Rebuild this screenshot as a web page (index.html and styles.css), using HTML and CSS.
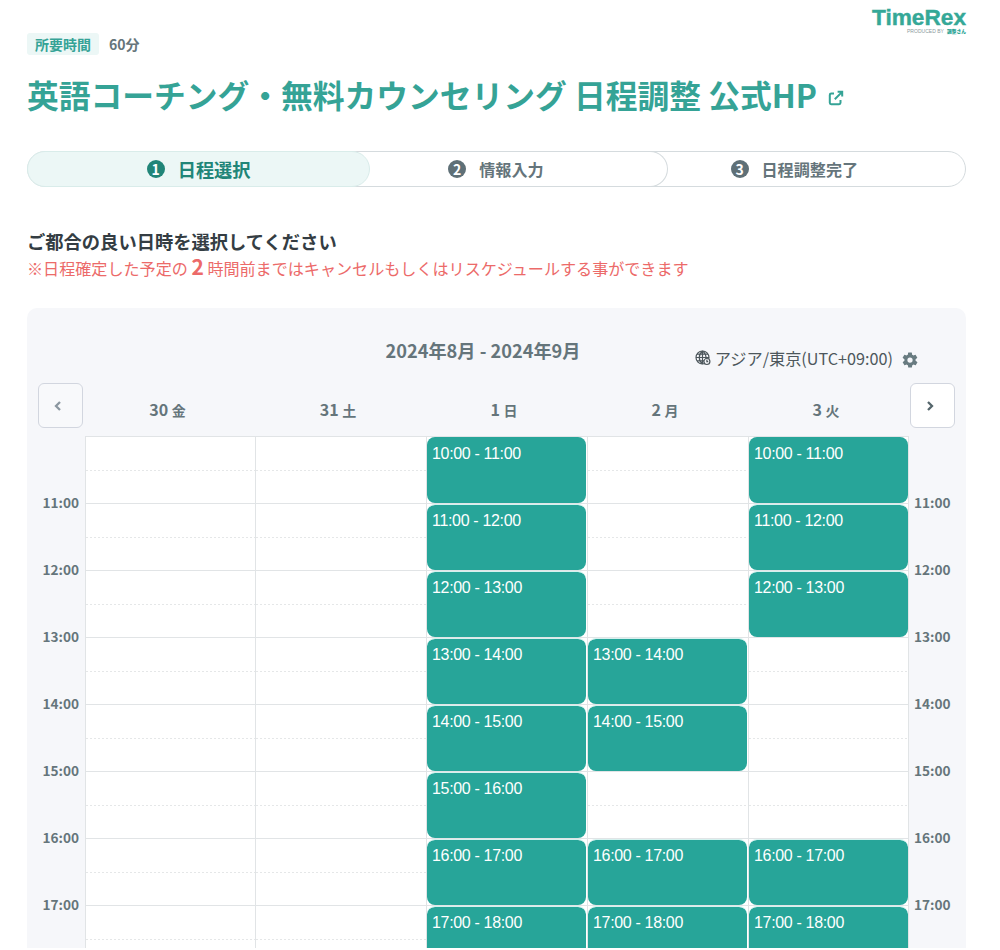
FILE: index.html
```html
<!DOCTYPE html>
<html lang="ja">
<head>
<meta charset="utf-8">
<title>日程調整 | TimeRex</title>
<link rel="stylesheet" href="styles.css">
</head>
<body>
<main class="page">
  <header class="top">
    <div class="duration"><span class="duration-tag">所要時間</span><span class="duration-value">60分</span></div>
    <svg class="logo" width="96" height="34" viewBox="0 0 96 34">
      <text class="logo-name" x="1" y="19.500" textLength="94" lengthAdjust="spacingAndGlyphs">TimeRex</text>
      <text class="logo-by" x="36" y="27.500" textLength="37" lengthAdjust="spacingAndGlyphs">PRODUCED BY</text>
      <text class="logo-brand" x="76" y="27.500" textLength="19" lengthAdjust="spacingAndGlyphs">調整さん</text>
    </svg>
  </header>
  <h1 class="title"><span>英語コーチング・無料カウンセリング 日程調整 公式HP</span>
    <svg class="title-link" width="16" height="16" viewBox="0 0 16 16"><path d="M6 3.500H3.200Q1.800 3.500 1.800 4.900V12.800Q1.800 14.200 3.200 14.200H11.100Q12.500 14.200 12.500 12.800V10M6.800 9.200L13.400 2.600M9.600 1.800H14.200V6.400"/></svg>
  </h1>
  <ol class="steps">
    <li class="step step-active"><span class="num">1</span>日程選択</li>
    <li class="step step-second"><span class="num">2</span>情報入力</li>
    <li class="step step-third"><span class="num">3</span>日程調整完了</li>
  </ol>
  <h2 class="lead">ご都合の良い日時を選択してください</h2>
  <p class="note">※日程確定した予定の <b>2</b> 時間前まではキャンセルもしくはリスケジュールする事ができます</p>

  <section class="calendar">
    <div class="cal-head">
      <div class="period">2024年8月 - 2024年9月</div>
      <div class="zone">
        <svg class="globe" width="16" height="16" viewBox="0 0 16 16"><circle cx="7.500" cy="7.500" r="6.500"/><path d="M7.500 1V14M1 7.500H14M2 4.200H13M2 10.800H9M7.500 1C3.200 4.500 3.200 10.500 7.500 14M7.500 1C10.400 3.200 11.400 6 10.800 9"/><circle class="clock" cx="11.900" cy="11.500" r="3"/><path d="M11.900 9.800V11.700H13.200"/></svg>
        <span>アジア/東京(UTC+09:00)</span>
        <svg class="gear" width="18" height="18" viewBox="0 0 24 24"><path d="M19.400 13a7.500 7.500 0 0 0 0-2l2.100-1.600a.5.5 0 0 0 .1-.7l-2-3.400a.5.5 0 0 0-.6-.2l-2.500 1a7.300 7.300 0 0 0-1.700-1L14.500 2.400a.5.5 0 0 0-.5-.4h-4a.5.5 0 0 0-.5.4l-.4 2.700a7.700 7.700 0 0 0-1.700 1l-2.500-1a.5.5 0 0 0-.6.2l-2 3.400a.5.5 0 0 0 .1.7L4.600 11a7.500 7.500 0 0 0 0 2l-2.100 1.600a.5.5 0 0 0-.1.700l2 3.400c.1.200.4.300.6.200l2.500-1a7.300 7.300 0 0 0 1.700 1l.4 2.700c0 .2.200.4.500.4h4c.2 0 .5-.2.5-.4l.4-2.700a7.700 7.700 0 0 0 1.700-1l2.500 1c.2.100.5 0 .6-.2l2-3.400a.5.5 0 0 0-.1-.7zM12 15.500a3.500 3.500 0 1 1 0-7 3.500 3.500 0 0 1 0 7z"/></svg>
      </div>
    </div>
    <div class="days">
      <button class="nav nav-prev" aria-label="前へ"><svg width="10" height="12" viewBox="0 0 10 12"><path d="M7 2L3 6L7 10"/></svg></button>
      <div class="day">30 <small>金</small></div>
      <div class="day">31 <small>土</small></div>
      <div class="day">1 <small>日</small></div>
      <div class="day">2 <small>月</small></div>
      <div class="day">3 <small>火</small></div>
      <button class="nav nav-next" aria-label="次へ"><svg width="10" height="12" viewBox="0 0 10 12"><path d="M3 2L7 6L3 10"/></svg></button>
    </div>
    <div class="hours">
      <div class="row"><div class="hour"></div><div class="cell"></div><div class="cell"></div><div class="cell"><div class="slot">10:00 - 11:00</div></div><div class="cell"></div><div class="cell"><div class="slot">10:00 - 11:00</div></div><div class="hour hour-right"></div></div>
      <div class="row"><div class="hour"><span>11:00</span></div><div class="cell"></div><div class="cell"></div><div class="cell"><div class="slot">11:00 - 12:00</div></div><div class="cell"></div><div class="cell"><div class="slot">11:00 - 12:00</div></div><div class="hour hour-right"><span>11:00</span></div></div>
      <div class="row"><div class="hour"><span>12:00</span></div><div class="cell"></div><div class="cell"></div><div class="cell"><div class="slot">12:00 - 13:00</div></div><div class="cell"></div><div class="cell"><div class="slot">12:00 - 13:00</div></div><div class="hour hour-right"><span>12:00</span></div></div>
      <div class="row"><div class="hour"><span>13:00</span></div><div class="cell"></div><div class="cell"></div><div class="cell"><div class="slot">13:00 - 14:00</div></div><div class="cell"><div class="slot">13:00 - 14:00</div></div><div class="cell"></div><div class="hour hour-right"><span>13:00</span></div></div>
      <div class="row"><div class="hour"><span>14:00</span></div><div class="cell"></div><div class="cell"></div><div class="cell"><div class="slot">14:00 - 15:00</div></div><div class="cell"><div class="slot">14:00 - 15:00</div></div><div class="cell"></div><div class="hour hour-right"><span>14:00</span></div></div>
      <div class="row"><div class="hour"><span>15:00</span></div><div class="cell"></div><div class="cell"></div><div class="cell"><div class="slot">15:00 - 16:00</div></div><div class="cell"></div><div class="cell"></div><div class="hour hour-right"><span>15:00</span></div></div>
      <div class="row"><div class="hour"><span>16:00</span></div><div class="cell"></div><div class="cell"></div><div class="cell"><div class="slot">16:00 - 17:00</div></div><div class="cell"><div class="slot">16:00 - 17:00</div></div><div class="cell"><div class="slot">16:00 - 17:00</div></div><div class="hour hour-right"><span>16:00</span></div></div>
      <div class="row"><div class="hour"><span>17:00</span></div><div class="cell"></div><div class="cell"></div><div class="cell"><div class="slot">17:00 - 18:00</div></div><div class="cell"><div class="slot">17:00 - 18:00</div></div><div class="cell"><div class="slot">17:00 - 18:00</div></div><div class="hour hour-right"><span>17:00</span></div></div>
    </div>
  </section>
</main>
</body>
</html>
```
FILE: styles.css
```css
* { box-sizing: border-box; }
body {
  margin: 0;
  height: 950px;
  overflow: hidden;
  background: #fff;
  color: #65757b;
  font-family: "Noto Sans CJK JP", sans-serif;
}
.page { width: 939px; margin-left: 27px; }
.top { display: flex; justify-content: space-between; height: 56px; padding-top: 5px; }
.duration { display: flex; align-items: center; gap: 9px; height: 22px; margin-top: 28px; font-size: 14px; font-weight: 700; }
.duration-tag { height: 22px; padding: 0 8px; line-height: 22px; border-radius: 3px; background: #ecf7f6; color: #35a396; }
.duration-value { margin-left: 1px; line-height: 22px; }
.logo { margin-right: -1px; overflow: visible; }
.logo-name { font: bold 21.500px "Liberation Sans", sans-serif; fill: #35a897; stroke: #35a897; stroke-width: 0.4; }
.logo-by { font: 5px "Liberation Sans", sans-serif; fill: #8b9a9c; }
.logo-brand { font: 900 5px "Noto Sans CJK JP", sans-serif; fill: #2ba394; }
.title { display: flex; align-items: center; gap: 11px; height: 48px; margin: 14px 0 0; color: #35a396; font-size: 31.750px; line-height: 48px; font-weight: 700; white-space: nowrap; }
.title-link { margin-top: 8px; fill: none; stroke: #35a396; stroke-width: 2; }
.steps { display: flex; height: 36px; margin: 33px 0 0; padding: 0; list-style: none; border: 1px solid #d5dbde; border-radius: 18px; }
.step { display: flex; align-items: center; justify-content: center; gap: 13px; height: 36px; margin-top: -1px; font-size: 16.100px; font-weight: 700; border-radius: 18px; }
.step-active { position: relative; z-index: 1; width: 344px; margin-left: -1px; background: #ecf7f6; border: 1px solid #d9ecea; color: #218578; font-size: 18.200px; }
.step-second { width: 316px; margin-left: -18px; padding-right: 44px; padding-left: 17px; border: 1px solid #d5dbde; border-left: 0; border-top-left-radius: 0; border-bottom-left-radius: 0; }
.step-third { width: 298px; padding-right: 44px; }
.num { width: 18px; height: 18px; border-radius: 50%; background: #5f7077; color: #fff; font-size: 14px; line-height: 18px; text-align: center; }
.step-active .num { background: #218578; }
.lead { height: 28px; margin: 40px 0 0; color: #343d43; font-size: 18.300px; line-height: 28px; font-weight: 700; }
.note { height: 26px; margin: 0; color: #ec6a69; font-size: 16.080px; line-height: 26px; white-space: nowrap; }
.note b { font-size: 21px; line-height: 20px; }
.calendar { height: 640px; margin-top: 27px; overflow: hidden; border-radius: 10px 10px 0 0; background: #f6f7fa; }
.cal-head { display: grid; grid-template-columns: 358.500px 196px 1fr; height: 74px; padding-top: 28px; }
.period { grid-column: 2; font-size: 18.200px; line-height: 28px; font-weight: 700; white-space: nowrap; }
.zone { display: flex; align-items: center; height: 28px; margin-top: 8px; padding-right: 47px; justify-content: flex-end; color: #4d575c; font-size: 16.200px; white-space: nowrap; }
.globe { margin-right: 4px; fill: none; stroke: #4d575c; stroke-width: 1.2; }
.globe .clock { fill: #f6f7fa; }
.gear { margin: 3px 0 0 8px; fill: #687b80; }
.days { display: grid; grid-template-columns: 58px 165px 176px 156px 166px 156px 62px; height: 54px; padding-top: 1px; }
.day { padding-top: 14px; font-size: 16px; line-height: 24px; font-weight: 700; text-align: center; }
.day small { font-size: 14px; }
.nav { display: flex; align-items: center; justify-content: center; width: 45px; height: 45px; padding: 0; border: 1px solid #d2d6df; border-radius: 6px; background: #fff; }
.nav-prev { margin-left: 11px; padding-right: 6px; background: #f8f9fb; }
.nav-next { margin-left: 6px; padding-right: 5px; }
.nav svg { fill: none; stroke: #55666c; stroke-width: 2.3; }
.nav-prev svg { stroke: #8b97a0; }
.row { display: grid; grid-template-columns: 58px 170px 171px 161px 161px 160px 58px; height: 67px; }
.cell { padding-right: 1px; border-top: 1px solid #e1e4e6; border-left: 1px solid #e1e4e6; background: repeating-linear-gradient(90deg, #e5e7e8 0 2px, #fff 2px 4px) 0 33px / 100% 1px no-repeat #fff; }
.cell:nth-child(6) { padding-right: 0; }
.slot { height: 66px; padding: 4px 0 0 5px; border-radius: 8px; border-top: 1px solid #d5f2ef; background: #27a599; background-clip: padding-box; color: #fff; font: 16px/23px "Liberation Sans", Arial, sans-serif; letter-spacing: -0.33px; }
.row:first-child .slot { padding-top: 5px; border-top: 0; }
.hour { padding-right: 6px; font-size: 13.600px; font-weight: 700; text-align: right; }
.hour-right { padding: 0 0 0 5px; border-left: 1px solid #e1e4e6; text-align: left; }
.hour span { display: block; height: 20px; margin-top: -11px; line-height: 20px; }
```
